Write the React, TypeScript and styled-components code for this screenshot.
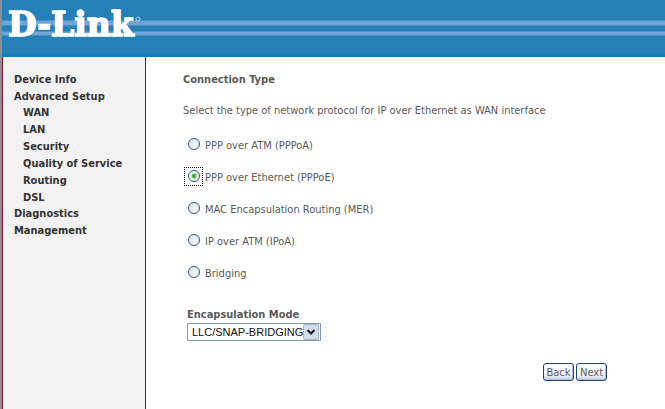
import React, { useState } from 'react';
import styled, { createGlobalStyle } from 'styled-components';

const GlobalStyle = createGlobalStyle`
  * { box-sizing: border-box; }
  html, body { margin: 0; background: #fff; }
  body, button, input, select {
    font-family: "DejaVu Sans Condensed", "DejaVu Sans", "Noto Sans", sans-serif;
    font-size: 11px;
  }
`;

const Page = styled.div`
  min-height: 100vh;
  display: flex;
  flex-direction: column;
  border-left: 2px solid #8e8e8e;
`;

const Header = styled.header`
  height: 57px;
  flex: none;
  padding: 14px 6px 0;
  background: linear-gradient(
    #267fb5 0 20px, #4a90c4 20px 21px, #70a4d4 21px 25px, #4a90c4 25px 26px,
    #267fb5 26px 31px, #4a90c4 31px 32px, #70a4d4 32px 35px, #4a90c4 35px 36px,
    #267fb5 36px 54px, #1d7bbb 54px 57px
  );
`;

const Logo = styled.svg`
  display: block;
  width: 136px;
  height: 28px;
  overflow: visible;
`;

const Body = styled.div`
  flex: 1;
  display: flex;
`;

const Sidebar = styled.nav`
  flex: none;
  width: 144px;
  padding: 14px 0 0 11px;
  background: #f2f2f2;
  border: solid #8e1038;
  border-width: 0 1px;
`;

const NavList = styled.ul`
  margin: 0;
  padding: 0;
  list-style: none;
  line-height: 17px;
`;

const SubList = styled(NavList)`
  margin: -1px 0 -1px 9px;
`;

const NavLink = styled.a`
  display: block;
  color: #333;
  font-weight: bold;
  text-decoration: none;
  white-space: nowrap;
`;

const Main = styled.main`
  flex: 1;
  min-width: 0;
  padding: 15px 58px 24px 37px;
  color: #5a5a5a;
`;

const Title = styled.h1`
  margin: 0 0 15px;
  font-size: 11px;
  line-height: 16px;
`;

const Intro = styled.p`
  margin: 0 0 10px;
  line-height: 16px;
`;

const Options = styled.fieldset`
  margin: 0;
  padding: 0;
  border: 0;
`;

const Option = styled.label`
  height: 32px;
  display: flex;
  align-items: center;
  gap: 2px;
  padding-left: 1px;
`;

const RadioFrame = styled.span<{ $focused: boolean }>`
  width: 19px;
  height: 19px;
  margin-bottom: 2px;
  display: grid;
  place-items: center;
  border: 1px dotted ${(p) => (p.$focused ? '#000' : 'transparent')};
`;

const Radio = styled.input`
  appearance: none;
  width: 12px;
  height: 12px;
  margin: 0;
  border: 1px solid #2f5577;
  border-radius: 50%;
  outline: none;
  background: linear-gradient(135deg, #dce6ee, #fff);
  &:checked {
    background: radial-gradient(circle, #21a121 0 1px, #dcf0dc 3px, #f6fbf6 5px);
  }
`;

const Field = styled.div`
  margin: 18px 0 0 4px;
`;

const FieldLabel = styled.label`
  display: block;
  font-weight: bold;
  line-height: 16px;
`;

const SelectBox = styled.div`
  width: 134px;
  height: 18px;
  display: grid;
  grid-template-columns: 1fr 17px;
  align-items: center;
  border: 1px solid #7f9db9;
  background: #fff;
`;

const Select = styled.select`
  appearance: none;
  grid-area: 1 / 1 / 2 / 3;
  height: 16px;
  margin: 0;
  padding: 0 17px 0 4px;
  border: 0;
  outline: none;
  background: transparent;
  color: #111;
  font-family: "Liberation Sans", sans-serif;
  font-size: 11px;
`;

const Arrow = styled.svg`
  grid-area: 1 / 2;
  width: 16px;
  height: 16px;
  pointer-events: none;
`;

const Actions = styled.div`
  display: flex;
  justify-content: flex-end;
  gap: 2px;
  margin-top: 22px;
`;

const Button = styled.button`
  height: 18px;
  min-width: 31px;
  padding: 0 2px;
  border: 1px solid #1f4470;
  border-radius: 3px;
  background: linear-gradient(#fff, #f1f2f7 70%, #c5cbe0);
  box-shadow: inset -1px -1px 0 #b3bcd8;
  color: #5a5a5a;
  line-height: 15px;
`;

type NavEntry = { label: string; children?: NavEntry[] };

const navItems: NavEntry[] = [
  { label: 'Device Info' },
  {
    label: 'Advanced Setup',
    children: [
      { label: 'WAN' },
      { label: 'LAN' },
      { label: 'Security' },
      { label: 'Quality of Service' },
      { label: 'Routing' },
      { label: 'DSL' },
    ],
  },
  { label: 'Diagnostics' },
  { label: 'Management' },
];

const protocols = [
  'PPP over ATM (PPPoA)',
  'PPP over Ethernet (PPPoE)',
  'MAC Encapsulation Routing (MER)',
  'IP over ATM (IPoA)',
  'Bridging',
];

export default function App() {
  const [protocol, setProtocol] = useState(protocols[1]);

  return (
    <>
      <GlobalStyle />
      <Page>
        <Header>
          <Logo viewBox="0 0 136 28" role="img" aria-label="D-Link">
            <text
              x="0"
              y="22"
              fill="#fff"
              stroke="#fff"
              strokeWidth="1.4"
              fontFamily="DejaVu Serif, serif"
              fontWeight="bold"
              fontSize="33"
            >
              D-Link
            </text>
            <circle cx="130" cy="5" r="2" fill="none" stroke="#a9cbe6" />
          </Logo>
        </Header>
        <Body>
          <Sidebar>
            <NavList>
              {navItems.map((item) => (
                <li key={item.label}>
                  <NavLink href="#">{item.label}</NavLink>
                  {item.children && (
                    <SubList>
                      {item.children.map((child) => (
                        <li key={child.label}>
                          <NavLink href="#">{child.label}</NavLink>
                        </li>
                      ))}
                    </SubList>
                  )}
                </li>
              ))}
            </NavList>
          </Sidebar>
          <Main>
            <Title>Connection Type</Title>
            <Intro>Select the type of network protocol for IP over Ethernet as WAN interface</Intro>
            <Options aria-label="Connection Type">
              {protocols.map((name) => (
                <Option key={name}>
                  <RadioFrame $focused={protocol === name}>
                    <Radio
                      type="radio"
                      name="protocol"
                      checked={protocol === name}
                      onChange={() => setProtocol(name)}
                    />
                  </RadioFrame>
                  {name}
                </Option>
              ))}
            </Options>
            <Field>
              <FieldLabel htmlFor="encapsulation">Encapsulation Mode</FieldLabel>
              <SelectBox>
                <Select id="encapsulation" defaultValue="LLC/SNAP-BRIDGING">
                  <option>LLC/SNAP-BRIDGING</option>
                  <option>VC/MUX</option>
                </Select>
                <Arrow viewBox="0 0 16 16" aria-hidden="true">
                  <rect x="0.5" y="0.5" width="15" height="15" rx="1.5" fill="#d5dcea" stroke="#a9b3c9" />
                  <path d="M4.5 6 L8 9.5 L11.5 6" fill="none" stroke="#222" strokeWidth="2.2" />
                </Arrow>
              </SelectBox>
            </Field>
            <Actions>
              <Button type="button">Back</Button>
              <Button type="button">Next</Button>
            </Actions>
          </Main>
        </Body>
      </Page>
    </>
  );
}
